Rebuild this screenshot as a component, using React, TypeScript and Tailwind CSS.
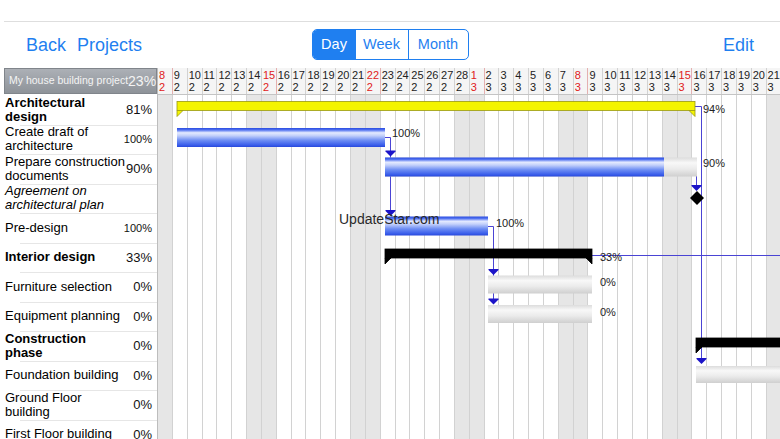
import React from "react";

const COL = 14.85;

type Day = { d: number; m: number; sun: boolean; weekend: boolean };
const days: Day[] = [];
for (let i = 0; i < 43; i++) {
  const d = i < 21 ? 8 + i : i - 20;
  const m = i < 21 ? 2 : 3;
  const dow = i % 7;
  days.push({ d, m, sun: dow === 0, weekend: dow === 0 || dow === 6 });
}

type Row = { name: string[]; pct: string; bold?: boolean; italic?: boolean; small?: boolean };
const rows: Row[] = [
  { name: ["Architectural", "design"], pct: "81%", bold: true },
  { name: ["Create draft of", "architecture"], pct: "100%", small: true },
  { name: ["Prepare construction", "documents"], pct: "90%" },
  { name: ["Agreement on", "architectural plan"], pct: "", italic: true },
  { name: ["Pre-design"], pct: "100%", small: true },
  { name: ["Interior design"], pct: "33%", bold: true },
  { name: ["Furniture selection"], pct: "0%" },
  { name: ["Equipment planning"], pct: "0%" },
  { name: ["Construction", "phase"], pct: "0%", bold: true },
  { name: ["Foundation building"], pct: "0%" },
  { name: ["Ground Floor", "building"], pct: "0%" },
  { name: ["First Floor building"], pct: "0%" },
];

const LINE = "#4a44d4";
const ARROW = "#1c14c8";

function Arrow({ x, y }: { x: number; y: number }) {
  return (
    <polygon
      points={`${x - 5},${y - 6} ${x + 5},${y - 6} ${x + 5},${y - 5} ${x},${y} ${x - 5},${y - 5}`}
      fill={ARROW}
    />
  );
}

function Summary({ x, y, w, fill, stroke, right = true }: { x: number; y: number; w: number; fill: string; stroke: string; right?: boolean }) {
  const h = 9;
  return (
    <g>
      <rect x={x} y={y} width={w} height={h} fill={fill} stroke={stroke} strokeWidth={0.8} />
      <polygon points={`${x},${y + h} ${x + 6},${y + h} ${x},${y + h + 6}`} fill={fill} stroke={stroke} strokeWidth={0.8} />
      {right && (
        <polygon points={`${x + w - 6},${y + h} ${x + w},${y + h} ${x + w},${y + h + 6}`} fill={fill} stroke={stroke} strokeWidth={0.8} />
      )}
    </g>
  );
}

function Chart() {
  return (
    <svg width={622} height={344} className="absolute left-0 top-0">
      <defs>
        <linearGradient id="blue" x1="0" y1="0" x2="0" y2="1">
          <stop offset="0" stopColor="#2a4ce0" />
          <stop offset="0.1" stopColor="#4e6ff0" />
          <stop offset="0.25" stopColor="#e4eaff" />
          <stop offset="0.4" stopColor="#c3d0fb" />
          <stop offset="0.65" stopColor="#6d8df3" />
          <stop offset="0.88" stopColor="#3d61ec" />
          <stop offset="1" stopColor="#2848dc" />
        </linearGradient>
        <linearGradient id="gray" x1="0" y1="0" x2="0" y2="1">
          <stop offset="0" stopColor="#dcdcdc" />
          <stop offset="0.28" stopColor="#f8f8f8" />
          <stop offset="0.6" stopColor="#ebebeb" />
          <stop offset="1" stopColor="#cfcfcf" />
        </linearGradient>
      </defs>

      {/* connectors */}
      <g stroke={LINE} strokeWidth={1} fill="none">
        <polyline points="227,42.5 232.5,42.5 232.5,116" />
        <polyline points="538.5,72 538.5,91" />
        <polyline points="330,131.5 335.5,131.5 335.5,204" />
        <polyline points="537,11.5 543.5,11.5 543.5,264" />
        <line x1="434" y1="160.5" x2="622" y2="160.5" />
      </g>

      {/* bars */}
      <Summary x={19} y={6.5} w={518} fill="#f4f400" stroke="#9a9a10" />
      <rect x={19} y={33} width={208} height={19} fill="url(#blue)" />
      <rect x={227} y={62.5} width={312} height={19} fill="url(#gray)" />
      <rect x={227} y={62.5} width={279} height={19} fill="url(#blue)" />
      <polygon points="539,96 546,103 539,110 532,103" fill="#000" />
      <rect x={227} y={121.5} width={103} height={19} fill="url(#blue)" />
      <Summary x={227} y={154} w={207} fill="#000" stroke="#000" />
      <rect x={330} y={180.5} width={104} height={18} fill="url(#gray)" />
      <rect x={330} y={210} width={104} height={18} fill="url(#gray)" />
      <Summary x={538} y={243} w={200} fill="#000" stroke="#000" right={false} />
      <rect x={538} y={271} width={200} height={17} fill="url(#gray)" />

      <Arrow x={232.5} y={61.5} />
      <Arrow x={232.5} y={121} />
      <Arrow x={538.5} y={96} />
      <Arrow x={335.5} y={180} />
      <Arrow x={335.5} y={209.5} />
      <Arrow x={543.5} y={269} />
    </svg>
  );
}

function Label({ x, y, children }: { x: number; y: number; children: React.ReactNode }) {
  return (
    <div className="absolute text-[11px] leading-[12px] text-[#222]" style={{ left: x, top: y - 6 }}>
      {children}
    </div>
  );
}

export default function App() {
  return (
    <div className="w-[780px] h-[439px] overflow-hidden bg-white flex flex-col font-['Liberation_Sans',Arial,sans-serif]">
      <div className="h-[22px] shrink-0 ml-[4px] border-b border-[#dedede]" />
      <nav className="h-[46px] shrink-0 grid grid-cols-[1fr_auto_1fr] items-center text-[#1f7ff0]">
        <div className="flex items-center gap-[11px] pl-[26px] text-[18px]">
          <span>Back</span>
          <span>Projects</span>
        </div>
        <div className="flex h-[31px] border border-[#1f7ff0] rounded-[5px] overflow-hidden text-[14.5px] mb-[1px]">
          <div className="w-[43px] flex items-center justify-center bg-[#1f7ff0] text-white">Day</div>
          <div className="w-[53px] flex items-center justify-center border-r border-[#1f7ff0]">Week</div>
          <div className="w-[59px] flex items-center justify-center">Month</div>
        </div>
        <div className="flex justify-end pr-[26px] text-[18px]">
          <span>Edit</span>
        </div>
      </nav>

      <div className="flex flex-1 min-h-0">
        {/* left table */}
        <div className="w-[158px] shrink-0 flex flex-col border-r border-[#bdbdbd]">
          <div className="h-[27px] shrink-0 pl-[4px]">
            <div className="h-[26px] flex items-center justify-between pl-[4px] pr-[1px] bg-gradient-to-b from-[#acb0b6] to-[#8e9399] border border-[#80858b] text-[#f4f4f4]">
              <span className="text-[10.5px] whitespace-nowrap">My house building project</span>
              <span className="text-[14px]">23%</span>
            </div>
          </div>
          {rows.map((r, i) => (
            <div key={i} className="h-[29.5px] shrink-0 flex flex-col">
              {i > 0 ? <div className="ml-[20px] h-px bg-[#e6e6e6] shrink-0" /> : <div className="h-px shrink-0" />}
              <div className="flex-1 flex items-center justify-between pl-[5px] pr-[5px] -mt-[1px]">
                <div
                  className={`text-[13px] leading-[14px] text-black whitespace-nowrap ${r.bold ? "font-bold" : ""} ${r.italic ? "italic" : ""}`}
                >
                  {r.name.map((l, j) => (
                    <div key={j}>{l}</div>
                  ))}
                </div>
                <div className={`${r.small ? "text-[11px]" : "text-[13px]"} text-[#111]`}>{r.pct}</div>
              </div>
            </div>
          ))}
        </div>

        {/* chart */}
        <div className="flex-1 min-w-0 flex flex-col overflow-hidden">
          <div className="h-[27px] shrink-0 flex bg-[#f5f5f5] border-b border-[#c4c4c4]">
            {days.map((d, i) => (
              <div
                key={i}
                className={`w-[14.85px] shrink-0 border-r ${d.sun ? "border-[#e4b0b0]" : "border-[#d2d2d2]"} pl-[1px] pt-[0.5px] text-[11px] leading-[12.5px] whitespace-nowrap ${d.sun ? "text-[#e02020]" : "text-[#222]"}`}
              >
                <div>{d.d}</div>
                <div>{d.m}</div>
              </div>
            ))}
          </div>
          <div className="relative flex-1">
            <div className="absolute inset-0 flex">
              {days.map((d, i) => (
                <div
                  key={i}
                  className={`w-[14.85px] shrink-0 h-full border-r border-[#d2d2d2] ${d.weekend ? "bg-[#e6e6e6]" : "bg-white"}`}
                />
              ))}
            </div>
            <Chart />
            <Label x={545} y={14}>94%</Label>
            <Label x={234} y={38}>100%</Label>
            <Label x={545} y={68}>90%</Label>
            <Label x={338} y={128}>100%</Label>
            <Label x={442} y={162}>33%</Label>
            <Label x={442} y={187}>0%</Label>
            <Label x={442} y={217}>0%</Label>
            <div className="absolute left-[181px] top-[116px] text-[14px] leading-[16px] text-[#2a2a2a]">UpdateStar.com</div>
          </div>
        </div>
      </div>
    </div>
  );
}
